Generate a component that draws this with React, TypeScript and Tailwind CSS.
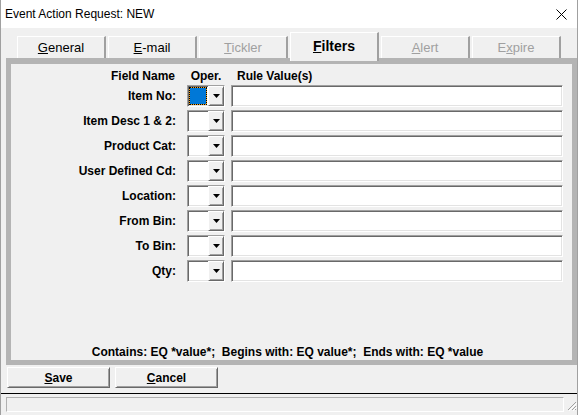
const font = "font-['Liberation_Sans',Arial,sans-serif]"

const sunken =
  'border border-t-[#a0a0a0] border-l-[#a0a0a0] border-b-white border-r-white shadow-[inset_1px_1px_#696969,inset_-1px_-1px_#e3e3e3]'
const raised =
  'border border-t-white border-l-white border-b-[#696969] border-r-[#696969] shadow-[inset_1px_1px_#f0f0f0,inset_-1px_-1px_#a0a0a0]'

const fields = [
  'Item No:',
  'Item Desc 1 & 2:',
  'Product Cat:',
  'User Defined Cd:',
  'Location:',
  'From Bin:',
  'To Bin:',
  'Qty:',
]

const tabs = [
  { pre: '', key: 'G', post: 'eneral', disabled: false },
  { pre: '', key: 'E', post: '-mail', disabled: false },
  { pre: '', key: 'T', post: 'ickler', disabled: true },
  { pre: '', key: 'F', post: 'ilters', disabled: false, active: true },
  { pre: '', key: 'A', post: 'lert', disabled: true },
  { pre: 'E', key: 'x', post: 'pire', disabled: true },
]

function Arrow() {
  return (
    <svg width="7" height="4" viewBox="0 0 7 4">
      <path d="M0 0h7L3.5 4z" fill="#000" />
    </svg>
  )
}

function Combo({ focused }: { focused?: boolean }) {
  return (
    <div className={`w-[38px] h-[22px] bg-white flex ${sunken}`}>
      <div className="flex-1 p-px">
        {focused && (
          <div className="w-full h-full bg-[#f7a21b]">
            <div className="w-full h-full border border-dotted border-black bg-[#0078d7] bg-clip-padding" />
          </div>
        )}
      </div>
      <div className={`w-[16px] h-full bg-[#f0f0f0] flex items-center justify-center ${raised}`}>
        <Arrow />
      </div>
    </div>
  )
}

export default function App() {
  return (
    <div className={`w-[578px] h-[415px] bg-[#f0f0f0] border-x border-[#a0a0a0] flex flex-col overflow-hidden text-black ${font}`}>
      {/* title bar */}
      <div className="h-[28px] bg-white flex items-center justify-between pl-[4px] pr-[10px] shrink-0">
        <span className="text-[12px] leading-none">Event Action Request: NEW</span>
        <svg width="11" height="11" viewBox="0 0 11 11">
          <path d="M0.5 0.5l10 10M10.5 0.5l-10 10" stroke="#000" strokeWidth="1" />
        </svg>
      </div>

      {/* tabs */}
      <div className="h-[30px] flex items-end gap-[2px] pl-[16px] shrink-0 relative z-10">
        {tabs.map((t) =>
          t.active ? (
            <div
              key={t.key}
              className="w-[89px] h-[29px] -mb-[3px] bg-[#f0f0f0] border-t border-l border-white border-r-2 border-r-[#a0a0a0] flex justify-center pt-[5px] text-[14px] font-bold leading-[16px]"
            >
              <span>
                <u>{t.key}</u>
                {t.post}
              </span>
            </div>
          ) : (
            <div
              key={t.key}
              className={`w-[89px] h-[22px] bg-[#f0f0f0] border-t border-l border-white border-r-2 border-r-[#a0a0a0] flex items-center justify-center text-[13px] leading-none ${t.disabled ? 'text-[#a0a0a0]' : ''}`}
            >
              <span>
                {t.pre}
                <u>{t.key}</u>
                {t.post}
              </span>
            </div>
          ),
        )}
      </div>

      {/* panel */}
      <div className="ml-[5px] h-[307px] shrink-0 border-x-[5px] border-t-[6px] border-b-[5px] border-[#b4b4b4] bg-[#f0f0f0] flex flex-col text-[12px] font-bold">
        <div className="pt-[5px] h-[19px] flex items-center leading-none">
          <div className="w-[164px] text-right">Field Name</div>
          <div className="ml-[12px] w-[38px] text-center">Oper.</div>
          <div className="ml-[6px] pl-[6px]">Rule Value(s)</div>
        </div>
        <div className="mt-[2px] flex flex-col gap-[3px]">
          {fields.map((f, i) => (
            <div key={f} className="h-[22px] flex items-center">
              <div className="w-[165px] text-right leading-none">{f}</div>
              <div className="ml-[11px]">
                <Combo focused={i === 0} />
              </div>
              <div className={`ml-[6px] w-[332px] h-[22px] bg-white ${sunken}`} />
            </div>
          ))}
        </div>
        <div className="flex-1" />
        <div className="h-[14px] mb-[1px] text-center leading-[14px] pr-[8px]">
          Contains: EQ *value*;&nbsp; Begins with: EQ value*;&nbsp; Ends with: EQ *value
        </div>
      </div>

      {/* buttons */}
      <div className="mt-[2px] ml-[6px] flex gap-[5px] shrink-0">
        {[
          ['S', 'ave'],
          ['C', 'ancel'],
        ].map(([k, r]) => (
          <div
            key={k}
            className={`w-[103px] h-[21px] bg-[#f0f0f0] flex items-center justify-center text-[12px] font-bold leading-none ${raised}`}
          >
            <span>
              <u>{k}</u>
              {r}
            </span>
          </div>
        ))}
      </div>

      <div className="mt-[5px] h-px bg-black shrink-0" />

      {/* status bar */}
      <div className="flex items-end shrink-0">
        <div className="mt-[3px] ml-[5px] w-[558px] h-[15px] border border-[#b0b0b0] border-b-white border-r-white" />
        <svg width="12" height="12" viewBox="0 0 12 12" className="ml-[1px] mb-[1px]">
          <path d="M11 3L3 11M11 7L7 11M11 10L10 11" stroke="#a0a0a0" strokeWidth="1" />
          <path d="M12 4L4 12M12 8L8 12" stroke="#fff" strokeWidth="1" />
        </svg>
      </div>
    </div>
  )
}
